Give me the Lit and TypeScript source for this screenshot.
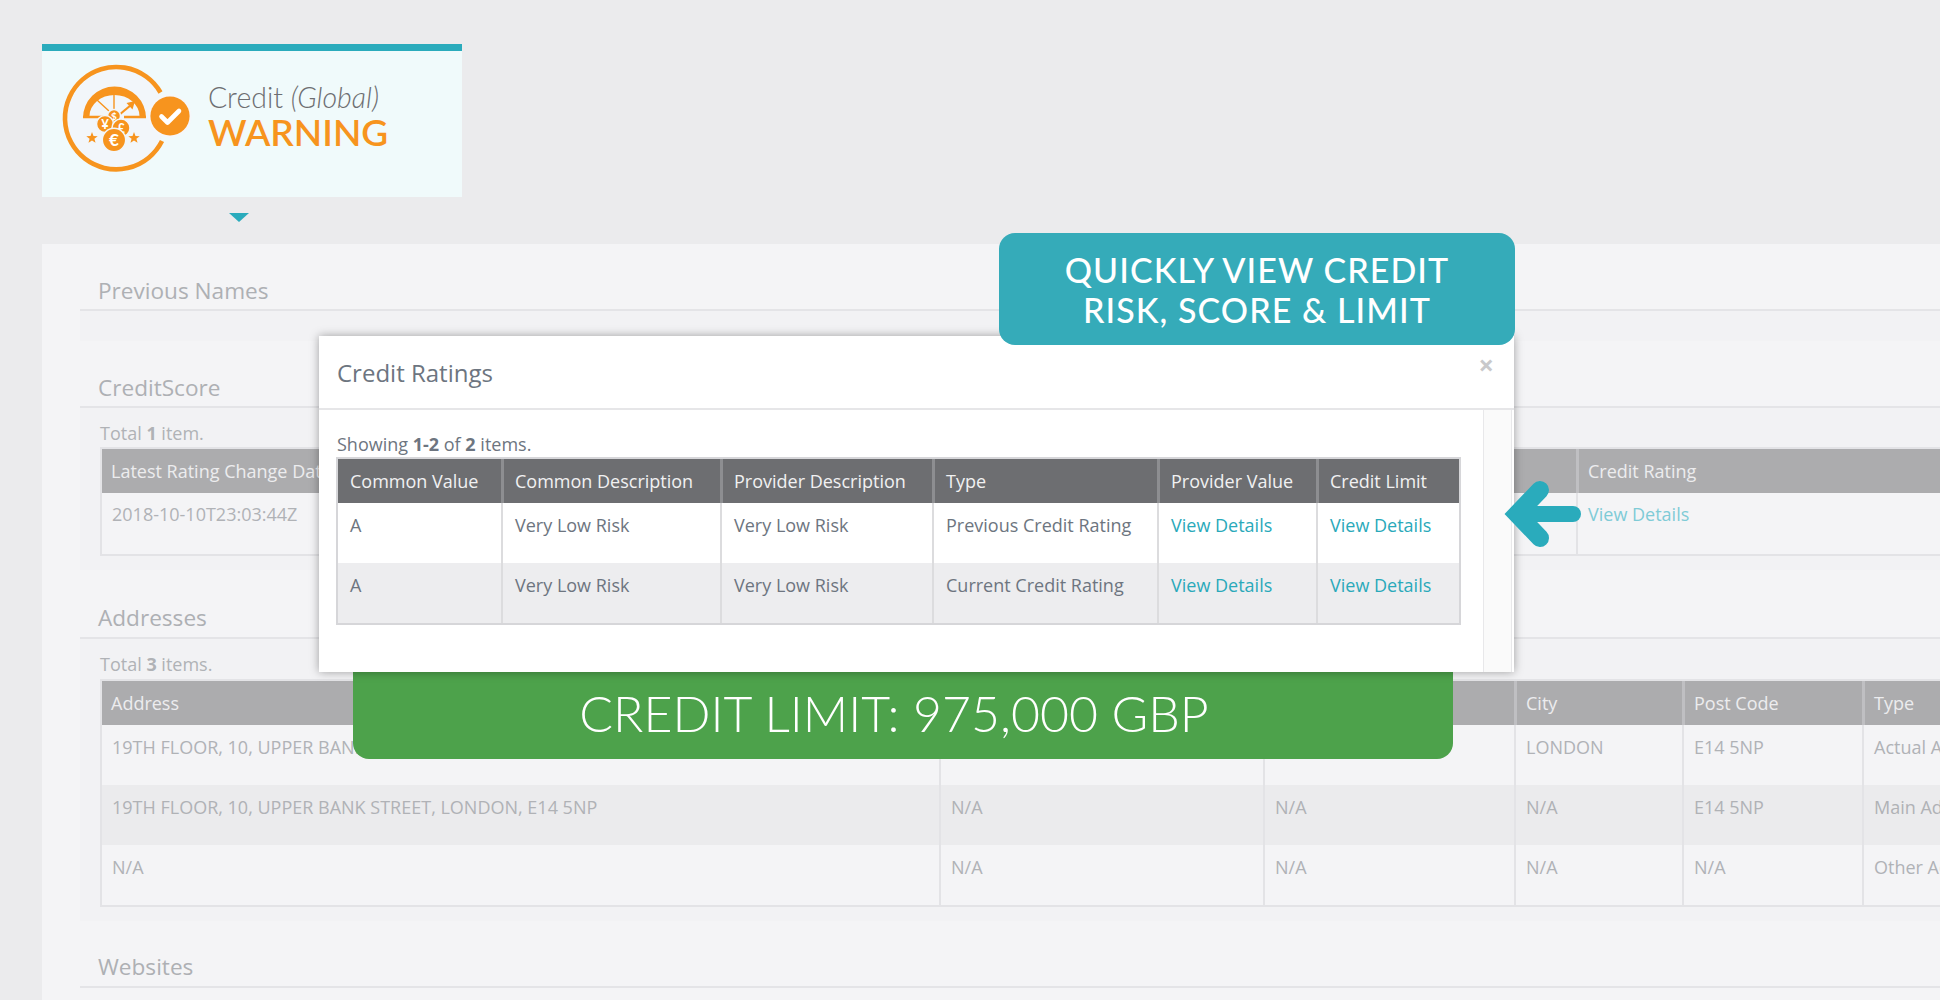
import { css, html, LitElement, svg } from "lit";
import { customElement } from "lit/decorators.js";

type Cell = string | { link: string };

const viewDetails: Cell = { link: "View Details" };

const scoreCols = [700, 774, 400];
const addressCols = [837, 324, 251, 168, 180, 200];
const modalCols = [163, 219, 212, 225, 159, 143];

const coin = (cx: number, cy: number, r: number, glyph: string, size: number) => svg`
  <circle cx=${cx} cy=${cy} r=${r} fill="#f7941e" stroke="#f2f6fa" stroke-width="1.5"></circle>
  <text x=${cx} y=${cy + size * 0.36} font-size=${size} font-weight="700" font-family="Lato, sans-serif"
    text-anchor="middle" fill="#fff">${glyph}</text>`;

const star = (cx: number, cy: number, r: number) => {
  const pts: string[] = [];
  for (let i = 0; i < 10; i++) {
    const a = -Math.PI / 2 + (i * Math.PI) / 5;
    const rad = i % 2 ? r * 0.42 : r;
    pts.push(`${(cx + rad * Math.cos(a)).toFixed(2)},${(cy + rad * Math.sin(a)).toFixed(2)}`);
  }
  return svg`<polygon points=${pts.join(" ")} fill="#f7941e"></polygon>`;
};

@customElement("app-root")
export class AppRoot extends LitElement {
  static styles = css`
    :host {
      display: block;
      position: relative;
      width: 1940px;
      height: 1000px;
      overflow: hidden;
      background: #ebebed;
      font-family: "Open Sans", sans-serif;
      color: #b0b2b6;
    }
    * {
      box-sizing: border-box;
    }

    .top {
      padding: 44px 0 0 42px;
      height: 244px;
    }
    .card {
      width: 420px;
      height: 153px;
      background: #f0fafb;
      border-top: 7px solid #2aabbc;
      display: flex;
      align-items: flex-start;
    }
    .logo {
      width: 166px;
      height: 146px;
      flex: none;
    }
    .card-text {
      padding-top: 29px;
      font-family: Lato, sans-serif;
    }
    .credit {
      font-size: 28.5px;
      line-height: 34px;
      font-weight: 300;
      color: #6d6e71;
    }
    .warning {
      font-size: 37px;
      line-height: 36px;
      font-weight: 600;
      color: #f7941e;
    }
    .caret {
      width: 0;
      margin: 16px 0 0 187px;
      border-left: 10px solid transparent;
      border-right: 10px solid transparent;
      border-top: 9px solid #2aabbc;
    }

    .panel {
      margin-left: 42px;
      background: #f4f4f6;
      padding-left: 38px;
      height: 756px;
    }
    .head {
      border-bottom: 2px solid #e4e4e7;
      display: flex;
      align-items: flex-end;
      padding: 0 0 3px 18px;
      font-size: 22.6px;
      line-height: 30px;
      color: #aeb0b4;
      height: 67px;
    }
    .head.addresses {
      margin-top: 2px;
      padding-bottom: 4px;
    }
    .head.websites {
      padding-bottom: 4px;
    }
    .body {
      background: #f2f2f4;
      padding-left: 20px;
    }
    .prev {
      height: 30px;
    }
    .score {
      height: 162px;
    }
    .addr {
      height: 282px;
    }
    .total {
      font-size: 18px;
      line-height: 24px;
      height: 40px;
      padding-top: 13px;
    }
    .score .total {
      height: 39px;
    }
    .score td {
      height: 61px;
      padding-top: 9px;
    }
    .total b,
    .showing b {
      font-weight: 700;
    }

    table {
      border-collapse: separate;
      border-spacing: 0;
      table-layout: fixed;
      border: 2px solid #e3e3e6;
      font-size: 18px;
      line-height: 24px;
    }
    th {
      height: 44px;
      padding: 0 0 0 9px;
      text-align: left;
      font-weight: 400;
      background: #acacae;
      color: #ececee;
      border-left: 3px solid #bfbfc2;
      white-space: nowrap;
      overflow: hidden;
    }
    td {
      height: 60px;
      padding: 10px 0 0 10px;
      vertical-align: top;
      background: #f4f4f6;
      border-left: 2px solid #e3e3e6;
      white-space: nowrap;
      overflow: hidden;
    }
    th:first-child,
    td:first-child {
      border-left: none;
    }
    tr.even td {
      background: #ebebed;
    }
    a {
      color: #7fcbd6;
      text-decoration: none;
    }

    .modal {
      position: absolute;
      left: 319px;
      top: 336px;
      width: 1195px;
      height: 336px;
      background: #fff;
      box-shadow: 0 0 9px rgba(0, 0, 0, 0.35);
      z-index: 2;
      color: #6d7580;
    }
    .modal-head {
      height: 74px;
      border-bottom: 2px solid #e6e6e8;
      padding: 19px 0 0 18px;
      font-size: 24px;
      line-height: 36px;
    }
    .close {
      position: absolute;
      right: 20px;
      top: 15px;
      font-size: 27px;
      line-height: 28px;
      font-weight: 700;
      color: #c9c9cb;
    }
    .modal-main {
      display: flex;
      height: 262px;
    }
    .modal-body {
      width: 1164px;
      padding: 22px 0 0 17px;
    }
    .scrollbar {
      width: 29px;
      background: #fafafa;
      border-left: 1px solid #e8e8ea;
      border-right: 1px solid #e8e8ea;
    }
    .showing {
      margin-left: 1px;
      font-size: 18px;
      line-height: 24px;
      height: 25px;
    }
    .modal table {
      border-color: #d6d6d9;
    }
    .modal th {
      background: #6d6e71;
      color: #f1f1f2;
      border-left-color: #8d8e91;
      padding-left: 11px;
    }
    .modal td {
      background: #fff;
      border-left-color: #dcdcde;
      padding-left: 12px;
    }
    .modal th:first-child {
      border-left: none;
      padding-left: 12px;
    }
    .modal td:first-child {
      border-left: none;
    }
    .modal tr.even td {
      background: #ededef;
    }
    .modal a {
      color: #2aa9ba;
    }

    .callout {
      position: absolute;
      left: 999px;
      top: 233px;
      width: 516px;
      height: 112px;
      padding-top: 17px;
      border-radius: 16px;
      background: #35abb9;
      color: #fff;
      z-index: 3;
      text-align: center;
      font-family: Lato, sans-serif;
      font-size: 34px;
      line-height: 40px;
      font-weight: 500;
      letter-spacing: 1.05px;
    }
    .limit {
      position: absolute;
      left: 353px;
      top: 660px;
      width: 1100px;
      height: 99px;
      padding: 21px 18px 0 0;
      border-radius: 0 0 16px 16px;
      background: #4da24b;
      color: #fff;
      z-index: 1;
      text-align: center;
      font-family: Lato, sans-serif;
      font-size: 50px;
      line-height: 64px;
      font-weight: 300;
    }
    .arrow {
      position: absolute;
      left: 1503px;
      top: 478px;
      width: 86px;
      height: 76px;
      z-index: 3;
    }
  `;

  private renderTable(cols: number[], heads: string[], rows: Cell[][]) {
    const total = cols.reduce((a, b) => a + b, 0) + 4;
    return html`<table style="width:${total}px">
      <colgroup>${cols.map((w) => html`<col style="width:${w}px" />`)}</colgroup>
      <thead>
        <tr>${heads.map((h) => html`<th>${h}</th>`)}</tr>
      </thead>
      <tbody>
        ${rows.map(
          (row, i) => html`<tr class=${i % 2 ? "even" : ""}>
            ${row.map((c) => html`<td>${typeof c === "string" ? c : html`<a>${c.link}</a>`}</td>`)}
          </tr>`
        )}
      </tbody>
    </table>`;
  }

  private renderLogo() {
    return html`<svg class="logo" viewBox="42 51 166 146">
      <circle cx="116.5" cy="118.5" r="49" fill="#f2f6fa"></circle>
      <path d="M160.5 92.5 A51.2 51.2 0 1 0 162 141" fill="none" stroke="#f7941e" stroke-width="4.6"></path>
      <path d="M83 118 A31.5 31.5 0 0 1 146 118 L139.5 116 A25 21 0 0 0 89.5 116 Z" fill="#f7941e"></path>
      <path d="M83 117 H107 M124 117 H146" stroke="#f7941e" stroke-width="2.4"></path>
      <path d="M114 93 V111 M97 100 L109 111" stroke="#f7941e" stroke-width="1.4"></path>
      <path d="M119 115 L131 105" stroke="#f7941e" stroke-width="2.2"></path>
      <path d="M135 101 L126.5 103 L132.5 109.5 Z" fill="#f7941e"></path>
      ${coin(114, 116, 6.5, "$", 10)}
      ${coin(105, 124, 8.5, "¥", 13)}
      ${coin(121, 128, 9, "£", 13)}
      ${coin(114, 140, 11.7, "€", 17)}
      ${star(92, 138, 6)}
      ${star(134, 138, 6)}
      <circle cx="170" cy="116" r="21.5" fill="#f5f7fa"></circle>
      <circle cx="170" cy="116" r="19.6" fill="#f7941e"></circle>
      <path d="M161.5 116.5 L167.5 122.5 L179 111" fill="none" stroke="#fff" stroke-width="4.6"
        stroke-linecap="round" stroke-linejoin="round"></path>
    </svg>`;
  }

  render() {
    return html`
      <div class="top">
        <div class="card">
          ${this.renderLogo()}
          <div class="card-text">
            <div class="credit">Credit <i>(Global)</i></div>
            <div class="warning">WARNING</div>
          </div>
        </div>
        <div class="caret"></div>
      </div>

      <div class="panel">
        <div class="head">Previous Names</div>
        <div class="body prev"></div>

        <div class="head">CreditScore</div>
        <div class="body score">
          <div class="total">Total <b>1</b> item.</div>
          ${this.renderTable(
            scoreCols,
            ["Latest Rating Change Date", "", "Credit Rating"],
            [["2018-10-10T23:03:44Z", "", viewDetails]]
          )}
        </div>

        <div class="head addresses">Addresses</div>
        <div class="body addr">
          <div class="total">Total <b>3</b> items.</div>
          ${this.renderTable(
            addressCols,
            ["Address", "", "", "City", "Post Code", "Type"],
            [
              ["19TH FLOOR, 10, UPPER BANK STREET, LONDON, E14 5NP", "", "", "LONDON", "E14 5NP", "Actual Address"],
              ["19TH FLOOR, 10, UPPER BANK STREET, LONDON, E14 5NP", "N/A", "N/A", "N/A", "E14 5NP", "Main Address"],
              ["N/A", "N/A", "N/A", "N/A", "N/A", "Other Address"],
            ]
          )}
        </div>

        <div class="head websites">Websites</div>
      </div>

      <div class="modal">
        <div class="modal-head">Credit Ratings</div>
        <span class="close">×</span>
        <div class="modal-main">
          <div class="modal-body">
            <div class="showing">Showing <b>1-2</b> of <b>2</b> items.</div>
            ${this.renderTable(
              modalCols,
              ["Common Value", "Common Description", "Provider Description", "Type", "Provider Value", "Credit Limit"],
              [
                ["A", "Very Low Risk", "Very Low Risk", "Previous Credit Rating", viewDetails, viewDetails],
                ["A", "Very Low Risk", "Very Low Risk", "Current Credit Rating", viewDetails, viewDetails],
              ]
            )}
          </div>
          <div class="scrollbar"></div>
        </div>
      </div>

      <div class="callout">QUICKLY VIEW CREDIT<br />RISK, SCORE &amp; LIMIT</div>
      <div class="limit">CREDIT LIMIT: 975,000 GBP</div>

      <svg class="arrow" viewBox="0 0 86 76">
        <path d="M37 12 L14 36 L37 60" fill="none" stroke="#2aabbc" stroke-width="18" stroke-linecap="round"></path>
        <path d="M14 36 H70" fill="none" stroke="#2aabbc" stroke-width="16" stroke-linecap="round"></path>
      </svg>
    `;
  }
}
